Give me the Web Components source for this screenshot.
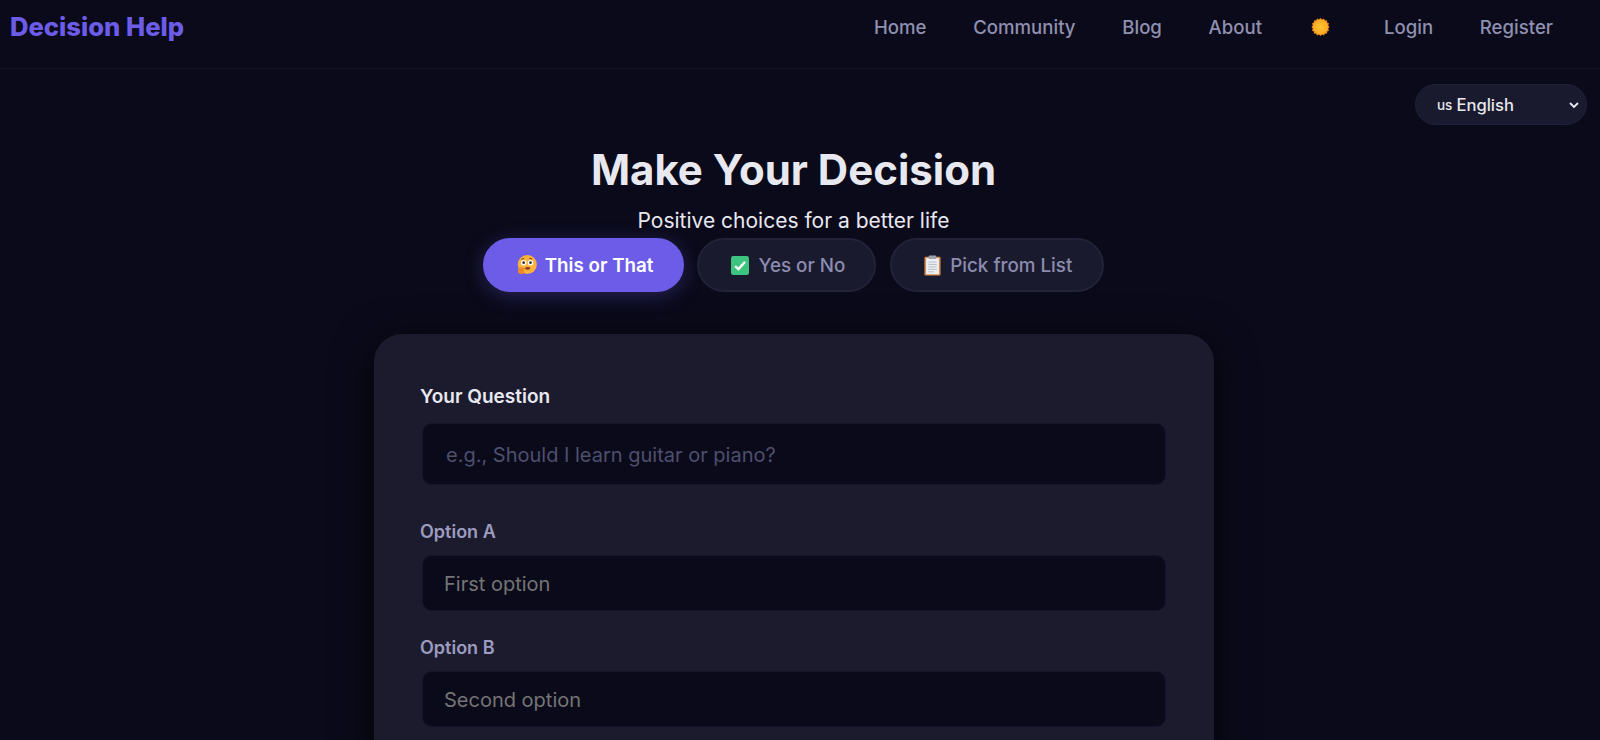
<!DOCTYPE html>
<html lang="en">
<head>
<meta charset="utf-8">
<title>Decision Help</title>
<style>
  html, body { margin: 0; background: #0a0a1a; }
  body { font-family: Inter, "Noto Sans", sans-serif; color: #e8e8f0; height: 740px; overflow: hidden; }
</style>
</head>
<body>
<site-nav></site-nav>
<lang-picker></lang-picker>
<page-hero heading="Make Your Decision" tagline="Positive choices for a better life"></page-hero>
<mode-tabs></mode-tabs>
<decision-card>
  <form-field label="Your Question" placeholder="e.g., Should I learn guitar or piano?" primary></form-field>
  <form-field label="Option A" placeholder="First option"></form-field>
  <form-field label="Option B" placeholder="Second option"></form-field>
</decision-card>

<script>
const icons = {
  sun: `<svg viewBox="0 0 20 20" width="19" height="20"><defs><radialGradient id="s"><stop offset="0" stop-color="#fcc62f"/><stop offset="1" stop-color="#f9a825"/></radialGradient></defs>
    <path fill="#ef8a1f" d="M10 .4l1.6 1.6 2.1-.9 1 2 2.2-.1.1 2.2 2 1-.9 2.1L19.6 10l-1.5 1.7.9 2.1-2 1-.1 2.2-2.2-.1-1 2-2.1-.9-1.6 1.6-1.6-1.6-2.1.9-1-2-2.2.1-.1-2.2-2-1 .9-2.1L.4 10l1.5-1.7-.9-2.1 2-1 .1-2.2 2.2.1 1-2 2.1.9z"/>
    <circle cx="10" cy="10" r="8" fill="url(#s)"/></svg>`,
  think: `<svg viewBox="1 0 21 22" width="20" height="21"><circle cx="11.8" cy="10" r="10" fill="#fbb33c"/>
    <circle cx="8" cy="8" r="2.9" fill="#fff"/><circle cx="15.2" cy="8" r="2.9" fill="#fff"/><circle cx="8" cy="8" r="1.4" fill="#3b2a2a"/><circle cx="15.2" cy="8" r="1.4" fill="#3b2a2a"/>
    <path d="M5.5 4.4l3-.8M13.8 3.4l3.2.8" stroke="#7a4a22" stroke-width="1.2" fill="none"/>
    <ellipse cx="12.2" cy="14" rx="2.8" ry="1.4" fill="#8a3a2c"/>
    <path d="M2.6 13.5c1.4-1 3-.9 4.4-.4l2.6 1.2c.6.5.2 1.2-.5 1.1l-1.5-.2 1 1.6c.4 2-1 3.4-3 3.4-2.6 0-4-2.2-3.6-4.4z" fill="#ec8a2a"/></svg>`,
  check: `<svg viewBox="0 0 20 20" width="18" height="19" preserveAspectRatio="none"><rect width="20" height="20" rx="2.5" fill="#3dc47e"/><path d="M4.6 10.6l3.6 3.2L15.6 6.2" stroke="#fff" stroke-width="2.6" fill="none"/></svg>`,
  clip: `<svg viewBox="0 0 18 24" width="17" height="21" preserveAspectRatio="none"><rect x="0.5" y="2" width="17" height="21.5" rx="1.5" fill="#d98c4e"/><rect x="2.2" y="3.6" width="13.6" height="18.4" fill="#eceff4"/>
    <rect x="5" y="0.6" width="8" height="4" rx="1" fill="#9aa3ad"/>
    <path d="M4.5 8h9M4.5 10.8h9M4.5 13.6h9M4.5 16.4h9M4.5 19.2h6" stroke="#b4bac4" stroke-width="1"/></svg>`
};

class SiteNav extends HTMLElement {
  connectedCallback() {
    const shadow = this.attachShadow({ mode: "open" });
    shadow.innerHTML = `
      <style>
        :host {
          display: flex;
          justify-content: space-between;
          align-items: flex-start;
          height: 69px;
          box-sizing: border-box;
          padding: 11px 47px 0 10px;
          border-bottom: 1px solid #16162a;
        }
        .logo { font-size: 25.6px; line-height: 31px; font-weight: 800; color: #6c5ce7; }
        nav { display: flex; align-items: center; gap: 46.7px; height: 31px; }
        a { font-size: 18.6px; font-weight: 500; color: #9090b0; text-decoration: none; }
        .theme { display: flex; width: 19px; justify-content: center; margin-right: 7.6px; padding-left: 2px; }
      </style>
      <div class="logo">Decision Help</div>
      <nav>
        <a href="#">Home</a>
        <a href="#">Community</a>
        <a href="#">Blog</a>
        <a href="#">About</a>
        <span class="theme">${icons.sun}</span>
        <a href="#">Login</a>
        <a href="#">Register</a>
      </nav>
    `;
  }
}

class LangPicker extends HTMLElement {
  connectedCallback() {
    const shadow = this.attachShadow({ mode: "open" });
    shadow.innerHTML = `
      <style>
        :host { display: flex; justify-content: flex-end; padding: 15px 13px 0 0; }
        .box {
          display: flex;
          align-items: center;
          box-sizing: border-box;
          width: 172px;
          height: 41px;
          padding: 0 6px 0 21px;
          border-radius: 21px;
          background: #1a1a2e;
          border: 1px solid #20203a;
          font-size: 16.6px;
          font-weight: 500;
          color: #e8e8f0;
        }
        small { font-size: 13.5px; margin-right: 4px; }
        svg { margin-left: auto; }
      </style>
      <div class="box"><small>us</small>English
        <svg viewBox="0 0 12 12" width="12" height="12"><path d="M2 4l4 4 4-4" stroke="#e8e8f0" stroke-width="1.8" fill="none"/></svg>
      </div>
    `;
  }
}

class PageHero extends HTMLElement {
  connectedCallback() {
    const shadow = this.attachShadow({ mode: "open" });
    shadow.innerHTML = `
      <style>
        :host { display: block; text-align: center; padding-top: 18px; margin-right: 13px; }
        h1 { margin: 0; font-size: 42px; line-height: 54px; font-weight: 700; color: #e8e8f0; }
        p { margin: 12px 0 0; font-size: 21px; line-height: 24px; color: #e8e8f0; }
      </style>
      <h1>${this.getAttribute("heading")}</h1>
      <p>${this.getAttribute("tagline")}</p>
    `;
  }
}

class ModeTabs extends HTMLElement {
  connectedCallback() {
    const shadow = this.attachShadow({ mode: "open" });
    shadow.innerHTML = `
      <style>
        :host { display: flex; justify-content: center; gap: 13px; padding-top: 5px; margin-right: 13px; }
        button {
          display: flex;
          align-items: center;
          gap: 9px;
          height: 54px;
          padding: 0 29px 0 32px;
          font: 500 18.8px Inter, sans-serif;
          border-radius: 27px;
          border: 2px solid #222238;
          background: #1a1a2e;
          color: #8c8cae;
          cursor: pointer;
        }
        button:last-child { margin-left: 1px; padding-right: 30px; }
        button.active {
          gap: 8px;
          font-weight: 600;
          background: #6c5ce7;
          border-color: #6c5ce7;
          color: #fff;
          box-shadow: 0 4px 20px rgba(108, 92, 231, 0.3);
        }
      </style>
      <button class="active">${icons.think}This or That</button>
      <button>${icons.check}Yes or No</button>
      <button>${icons.clip}Pick from List</button>
    `;
  }
}

class DecisionCard extends HTMLElement {
  connectedCallback() {
    const shadow = this.attachShadow({ mode: "open" });
    shadow.innerHTML = `
      <style>
        :host {
          display: block;
          box-sizing: border-box;
          width: 840px;
          margin: 42px 0 0 374px;
          padding: 48px 47px 48px 46px;
          border-radius: 28px;
          background: #1c1b2e;
          box-shadow: 0 8px 40px rgba(0, 0, 0, 0.6);
        }
      </style>
      <slot></slot>
    `;
  }
}

class FormField extends HTMLElement {
  connectedCallback() {
    const shadow = this.attachShadow({ mode: "open" });
    const primary = this.hasAttribute("primary");
    shadow.innerHTML = `
      <style>
        :host { display: block; margin-bottom: ${primary ? 35 : 25}px; }
        label { display: block; padding-top: 1px; font-size: ${primary ? 19 : 18}px; line-height: ${primary ? 28 : 22}px; font-weight: 600; color: ${primary ? "#e8e8f0" : "#9c9cc0"}; margin-bottom: 12px; }
        input {
          display: block;
          box-sizing: border-box;
          width: calc(100% - 3px);
          margin: 0 1px 0 2px;
          height: ${primary ? 62 : 56}px;
          padding: 2px ${primary ? 23 : 21}px 0;
          font: 20px Inter, sans-serif;
          color: #e8e8f0;
          background: #0a0a1a;
          border: 1px solid #13132a;
          border-radius: 10px;
          outline: none;
        }
        input::placeholder { color: ${primary ? "#4f4f6e" : "#757575"}; opacity: 1; }
      </style>
      <label>${this.getAttribute("label")}</label>
      <input type="text" placeholder="${this.getAttribute("placeholder")}">
    `;
  }
}

customElements.define("site-nav", SiteNav);
customElements.define("lang-picker", LangPicker);
customElements.define("page-hero", PageHero);
customElements.define("mode-tabs", ModeTabs);
customElements.define("decision-card", DecisionCard);
customElements.define("form-field", FormField);
</script>
</body>
</html>
